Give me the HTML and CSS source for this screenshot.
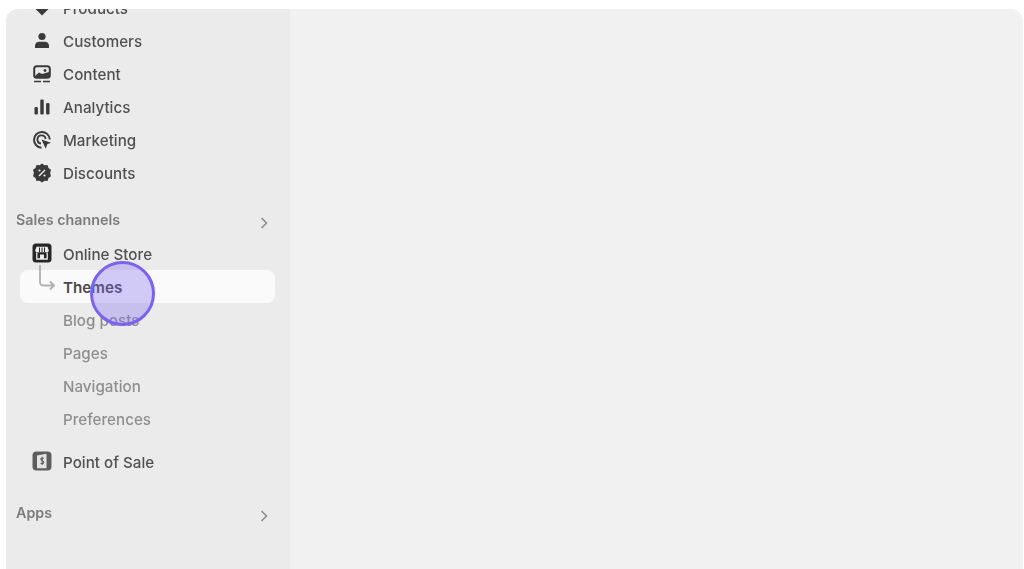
FILE: index.html
```html
<!DOCTYPE html>
<html>
<head>
    <title>Themes</title>
    <link rel="stylesheet" href="styles.css">
</head>
<body>
    <div class="frame">
        <aside class="sidebar">
            <nav class="nav">
                <div class="nav-item">
                    <svg class="icon" viewBox="0 0 20 20"><path d="M1 2h18v6.500l-9 9-9-9z" fill="#3a3a3a"/></svg>
                    <span>Products</span>
                </div>
                <div class="nav-item">
                    <svg class="icon" viewBox="0 0 20 20"><circle cx="10" cy="5.500" r="3.600" fill="#3a3a3a"/><path d="M3 17v-2.500c0-2.400 2-3.800 4-3.800h6c2 0 4 1.400 4 3.800V17z" fill="#3a3a3a"/></svg>
                    <span>Customers</span>
                </div>
                <div class="nav-item">
                    <svg class="icon" viewBox="0 0 20 20"><rect x="2.200" y="2.200" width="15.600" height="11.600" rx="2.500" fill="none" stroke="#3a3a3a" stroke-width="2"/><path d="M3 12l4-3.500 3 1.500 7-2v5H3z" fill="#3a3a3a"/><circle cx="13" cy="6.500" r="1.400" fill="#3a3a3a"/><path d="M2 17.500h7M11 17.500h7" stroke="#3a3a3a" stroke-width="1.700"/></svg>
                    <span>Content</span>
                </div>
                <div class="nav-item">
                    <svg class="icon" viewBox="0 0 20 20"><rect x="2.500" y="10" width="3.400" height="7.500" rx="1.200" fill="#3a3a3a"/><rect x="8.300" y="2.500" width="3.400" height="15" rx="1.200" fill="#3a3a3a"/><rect x="14.100" y="6" width="3.400" height="11.500" rx="1.200" fill="#3a3a3a"/></svg>
                    <span>Analytics</span>
                </div>
                <div class="nav-item">
                    <svg class="icon" viewBox="0 0 20 20"><path d="M9.500 17.800A7.900 7.900 0 1 1 17.800 9.500" fill="none" stroke="#3a3a3a" stroke-width="2"/><path d="M9 13.500A4.100 4.100 0 1 1 13.600 9" fill="none" stroke="#3a3a3a" stroke-width="1.900"/><path d="M9.500 9.500l9.500 3.200-3.700 1.600-1.600 4.500z" fill="#3a3a3a"/></svg>
                    <span>Marketing</span>
                </div>
                <div class="nav-item">
                    <svg class="icon" viewBox="0 0 20 20"><path d="M10 .5l2.500 1.800 3-.2 1 2.900 2.500 1.800-.9 3.200.9 3.200-2.500 1.800-1 2.900-3-.2L10 19.500l-2.500-1.800-3 .2-1-2.900L1 13.200l.9-3.200L1 6.800l2.500-1.800 1-2.900 3 .2z" fill="#3a3a3a"/><path d="M7 13l6-6" stroke="#ebebeb" stroke-width="1.400"/><circle cx="7.500" cy="7.500" r="1.100" fill="#ebebeb"/><circle cx="12.500" cy="12.500" r="1.100" fill="#ebebeb"/></svg>
                    <span>Discounts</span>
                </div>

                <div class="section-title">
                    <span>Sales channels</span>
                    <svg class="chevron" viewBox="0 0 10 14"><path d="M2.500 2l5 5-5 5" fill="none" stroke="#8a8a8a" stroke-width="1.500"/></svg>
                </div>
                <div class="nav-item online-item">
                    <svg class="icon" viewBox="0 0 20 20"><rect x="0.500" y="0.500" width="19" height="19" rx="3.500" fill="#262626"/><path d="M4.500 3.800h11l1.300 3.700c0 1.200-1 1.800-1.800 1.800H5c-.8 0-1.800-.6-1.800-1.800z" fill="#ededed"/><path d="M7.500 4.500v4.500M10 4.500v4.500M12.500 4.500v4.500" stroke="#262626" stroke-width="1"/><path d="M4.800 9.500v6.500h10.400V9.500" fill="none" stroke="#ededed" stroke-width="1.300"/><rect x="8" y="11.500" width="4" height="4.500" fill="#ededed"/></svg>
                    <span>Online Store</span>
                </div>
                <div class="nav-item sub-item active">
                    <svg class="branch" viewBox="0 0 20 28"><path d="M2 0v17c0 2.500 1 3.500 3.500 3.500H16M12 16.500l4 4-4 4" fill="none" stroke="#b0b0b0" stroke-width="1.800"/></svg>
                    <span>Themes</span>
                </div>
                <div class="nav-item sub-item"><span>Blog posts</span></div>
                <div class="nav-item sub-item"><span>Pages</span></div>
                <div class="nav-item sub-item"><span>Navigation</span></div>
                <div class="nav-item sub-item"><span>Preferences</span></div>
                <div class="nav-item pos-item">
                    <svg class="icon" viewBox="0 0 20 20"><rect x="0.500" y="0.500" width="19" height="19" rx="4" fill="#5e5e5e"/><path d="M5 4.500l9.500-1.800v14.600H5z" fill="#e4e4e4"/><path d="M11.800 7.500c-.8-.8-3-.7-3 .8 0 1.600 3 1.300 3 3 0 1.500-2.200 1.700-3.300.8M10.200 5.800v8.200" fill="none" stroke="#5e5e5e" stroke-width="1.100"/></svg>
                    <span>Point of Sale</span>
                </div>
                <div class="section-title apps-title">
                    <span>Apps</span>
                    <svg class="chevron" viewBox="0 0 10 14"><path d="M2.500 2l5 5-5 5" fill="none" stroke="#8a8a8a" stroke-width="1.500"/></svg>
                </div>
            </nav>
        </aside>
        <main class="content"></main>
    </div>
    <div class="click-marker"></div>
</body>
</html>
```
FILE: styles.css
```css
html, body {
    height: 100%;
}
body {
    margin: 0;
    background-color: #fff;
    font-family: 'Inter', 'Liberation Sans', sans-serif;
    overflow: hidden;
}
.frame {
    display: flex;
    height: 560px;
    margin: 9px 1px 0 6px;
    border-radius: 12px 12px 0 0;
    overflow: hidden;
    background-color: #f1f1f1;
}
.sidebar {
    width: 284px;
    flex-shrink: 0;
    background-color: #ebebeb;
    overflow: hidden;
}
.nav {
    margin-top: -17px;
    padding: 0 15px 0 14px;
    filter: blur(0.5px);
}
.nav-item {
    display: flex;
    align-items: center;
    box-sizing: border-box;
    height: 33px;
    padding-left: 43px;
    position: relative;
    font-size: 15.2px;
    font-weight: 500;
    color: #505050;
}
.icon {
    position: absolute;
    left: 12px;
    top: 6px;
    width: 20px;
    height: 20px;
}
.sub-item {
    padding-top: 1px;
    color: #8e8e8e;
}
.sub-item.active {
    background-color: #fafafa;
    border-radius: 8px;
    color: #4a4a4a;
    font-weight: 600;
}
.branch {
    position: absolute;
    left: 18px;
    top: -5px;
    width: 20px;
    height: 28px;
}
.online-item {
    padding-top: 1px;
}
.pos-item {
    margin-top: 10px;
    padding-top: 1px;
}
.section-title {
    display: flex;
    align-items: center;
    justify-content: space-between;
    box-sizing: border-box;
    height: 33px;
    margin-top: 14px;
    margin-left: -4px;
    padding-right: 6px;
    padding-bottom: 2px;
    font-size: 14.3px;
    font-weight: 600;
    color: #7c7c7c;
}
.apps-title {
    margin-top: 18px;
    padding-bottom: 0;
}
.chevron {
    width: 10px;
    height: 14px;
    margin-top: 6px;
}
.content {
    flex-grow: 1;
}
.click-marker {
    position: absolute;
    left: 90px;
    top: 261px;
    width: 59px;
    height: 59px;
    border: 3px solid #7c62ee;
    border-radius: 50%;
    background-color: rgba(124, 98, 238, 0.32);
}
```
